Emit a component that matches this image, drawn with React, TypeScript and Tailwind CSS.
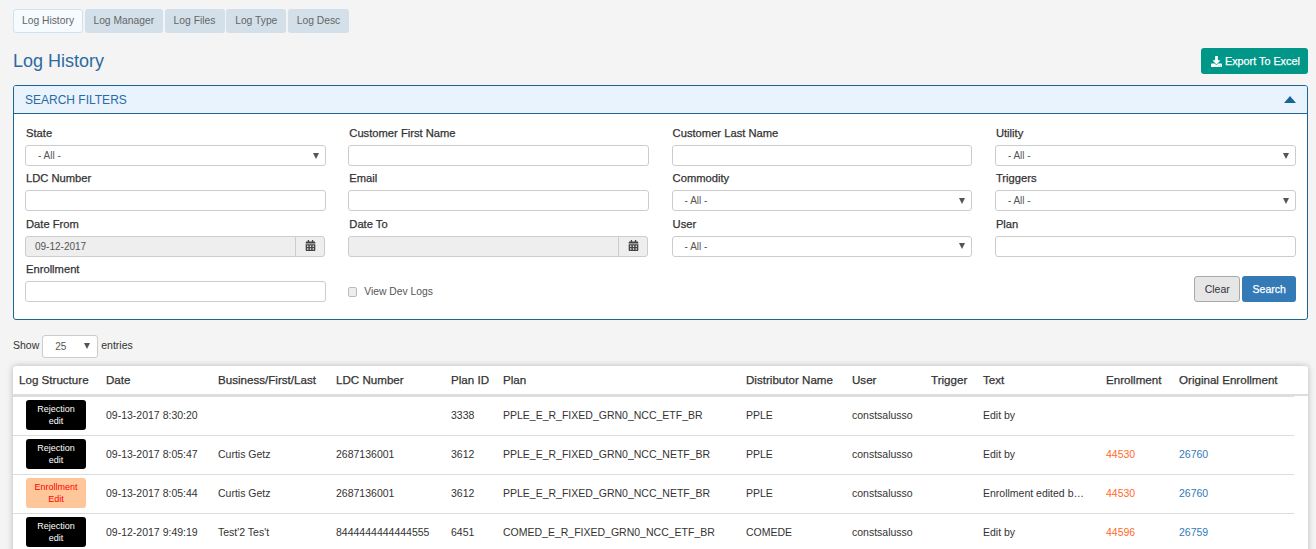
import { FaCalendarAlt, FaDownload } from 'react-icons/fa'

const tabs = [
  { label: 'Log History', w: 'w-[70px]', active: true },
  { label: 'Log Manager', w: 'w-[78px]' },
  { label: 'Log Files', w: 'w-[60px]' },
  { label: 'Log Type', w: 'w-[60px]' },
  { label: 'Log Desc', w: 'w-[61px]' },
]

const Field = ({ label, children }: { label?: string; children: React.ReactNode }) => (
  <div className="flex flex-col">
    <label className="h-[21px] pt-[1px] pl-[1px] text-[11.2px] leading-[16px] font-normal text-[#333] [-webkit-text-stroke:0.25px_#333]">{label}</label>
    {children}
  </div>
)

const TextInput = () => (
  <input className="h-[21px] w-full rounded-[3px] border border-[#ccc] bg-white" />
)

const Arrow = () => (
  <span className="mr-[2px] h-0 w-0 border-x-[3px] border-t-[6px] border-x-transparent border-t-[#555]" />
)

const Select = () => (
  <div className="flex h-[21px] w-full items-center justify-between rounded-[3px] border border-[#ccc] bg-white pl-[12px] pr-[4px] text-[10px] text-[#555]">
    <span>- All -</span>
    <Arrow />
  </div>
)

const DateInput = ({ value }: { value?: string }) => (
  <div className="flex h-[21px] w-[300px] rounded-[3px] border border-[#ccc] bg-[#eee]">
    <div className="flex-1 pl-[9px] text-[10px] leading-[19px] text-[#555]">{value}</div>
    <div className="flex w-[29px] items-center justify-center border-l border-[#ccc]">
      <FaCalendarAlt className="mb-[1px] text-[11px] text-[#444]" />
    </div>
  </div>
)

const Badge = ({ kind }: { kind: 'rejection' | 'enrollment' }) =>
  kind === 'rejection' ? (
    <div className="ml-[7px] h-[30px] w-[60px] rounded-[3px] bg-black pt-[3px] text-center text-[9px] leading-[12px] text-white">
      Rejection
      <br />
      edit
    </div>
  ) : (
    <div className="ml-[7px] h-[30px] w-[60px] rounded-[3px] bg-[#ffc799] pt-[3px] text-center text-[9px] leading-[12px] text-[#f00]">
      Enrollment
      <br />
      Edit
    </div>
  )

const rows = [
  { kind: 'rejection', date: '09-13-2017 8:30:20', name: '', ldc: '', planId: '3338', plan: 'PPLE_E_R_FIXED_GRN0_NCC_ETF_BR', dist: 'PPLE', text: 'Edit by', enr: '', orig: '' },
  { kind: 'rejection', date: '09-13-2017 8:05:47', name: 'Curtis Getz', ldc: '2687136001', planId: '3612', plan: 'PPLE_E_R_FIXED_GRN0_NCC_NETF_BR', dist: 'PPLE', text: 'Edit by', enr: '44530', orig: '26760' },
  { kind: 'enrollment', date: '09-13-2017 8:05:44', name: 'Curtis Getz', ldc: '2687136001', planId: '3612', plan: 'PPLE_E_R_FIXED_GRN0_NCC_NETF_BR', dist: 'PPLE', text: 'Enrollment edited b…', enr: '44530', orig: '26760' },
  { kind: 'rejection', date: '09-12-2017 9:49:19', name: "Test'2 Tes't", ldc: '8444444444444555', planId: '6451', plan: 'COMED_E_R_FIXED_GRN0_NCC_ETF_BR', dist: 'COMEDE', text: 'Edit by', enr: '44596', orig: '26759' },
] as const

const columns = [
  { label: 'Log Structure', w: 'w-[93px] pl-[6px]' },
  { label: 'Date', w: 'w-[112px]' },
  { label: 'Business/First/Last', w: 'w-[118px]' },
  { label: 'LDC Number', w: 'w-[115px]' },
  { label: 'Plan ID', w: 'w-[52px]' },
  { label: 'Plan', w: 'w-[243px]' },
  { label: 'Distributor Name', w: 'w-[106px]' },
  { label: 'User', w: 'w-[79px]' },
  { label: 'Trigger', w: 'w-[52px]' },
  { label: 'Text', w: 'w-[123px]' },
  { label: 'Enrollment', w: 'w-[73px]' },
  { label: 'Original Enrollment', w: 'w-[115px]' },
]

export default function App() {
  return (
    <div className="h-[549px] overflow-hidden bg-[#f4f4f4] pl-[13px] pr-[8px] pt-[9px] font-['Liberation_Sans',Arial,sans-serif] text-[11px] text-[#333]">
      {/* Tabs */}
      <div className="flex h-[24px] gap-[1.75px]">
        {tabs.map((t) => (
          <div
            key={t.label}
            className={
              t.active
                ? `${t.w} rounded-[3px] border border-[#cfe2f0] bg-[#f5fbff] text-center text-[10.3px] leading-[22px] text-[#666]`
                : `${t.w} rounded-[3px] bg-[#d3e0ea] text-center text-[10.3px] leading-[24px] text-[#666]`
            }
          >
            {t.label}
          </div>
        ))}
      </div>

      {/* Title row */}
      <div className="mt-[15px] flex h-[37px] items-start justify-between">
        <h1 className="pt-[1px] text-[18px] leading-[24px] font-normal text-[#2c6aa0]">Log History</h1>
        <button className="flex h-[26px] w-[107px] items-center gap-[3px] rounded-[3px] bg-[#009688] pl-[10px] text-[10.8px] text-white [-webkit-text-stroke:0.25px_#fff]">
          <FaDownload className="text-[11px]" />
          Export To Excel
        </button>
      </div>

      {/* Search filters */}
      <div className="overflow-hidden rounded-[3px] border border-[#1a6496] bg-white">
        <div className="flex h-[28px] items-center justify-between border-b border-[#1a6496] bg-[#e8f3fd] pl-[11px] pr-[11px] text-[12px] text-[#2c6aa0]">
          <span>SEARCH FILTERS</span>
          <span className="h-0 w-0 border-x-[6px] border-b-[7px] border-x-transparent border-b-[#1a6496]" />
        </div>
        <div className="h-[205px] pl-[11px] pt-[10px]">
          <div className="grid grid-cols-[repeat(4,300.8px)] gap-x-[22.5px] gap-y-[3.33px]">
            <Field label="State"><Select /></Field>
            <Field label="Customer First Name"><TextInput /></Field>
            <Field label="Customer Last Name"><TextInput /></Field>
            <Field label="Utility"><Select /></Field>
            <Field label="LDC Number"><TextInput /></Field>
            <Field label="Email"><TextInput /></Field>
            <Field label="Commodity"><Select /></Field>
            <Field label="Triggers"><Select /></Field>
            <Field label="Date From"><DateInput value="09-12-2017" /></Field>
            <Field label="Date To"><DateInput /></Field>
            <Field label="User"><Select /></Field>
            <Field label="Plan"><TextInput /></Field>
            <Field label="Enrollment"><TextInput /></Field>
            <div className="flex items-end pb-[4px]">
              <span className="mb-[1px] h-[10px] w-[9px] rounded-[2px] border border-[#bbb] bg-[#eee]" />
              <span className="ml-[7px] text-[10.3px] leading-[12px] text-[#555]">View Dev Logs</span>
            </div>
            <div />
            <div className="flex items-start justify-end gap-[2px] pt-[16px]">
              <button className="h-[26px] w-[46px] rounded-[3px] border border-[#aaa] bg-[#e6e6e6] pt-[1px] pl-[1px] text-[10.5px] text-[#333]">Clear</button>
              <button className="h-[26px] w-[54px] rounded-[3px] bg-[#337ab7] pt-[1px] pl-[1px] text-[10.5px] text-white [-webkit-text-stroke:0.25px_#fff]">Search</button>
            </div>
          </div>
        </div>
      </div>

      {/* Entries */}
      <div className="mt-[14px] flex h-[24px] items-center text-[10.5px]">
        <span>Show</span>
        <div className="mx-[3px] flex h-[23px] w-[56px] items-center justify-between rounded-[3px] border border-[#ccc] bg-white pl-[12px] pr-[5px] text-[10px] text-[#555]">
          <span>25</span>
          <Arrow />
        </div>
        <span>entries</span>
      </div>

      {/* Table */}
      <div className="mt-[8px] h-[200px] rounded-[3px] bg-white shadow-[0_0_6px_rgba(0,0,0,0.25)]">
        <div className="border-b-2 border-[#ddd]">
          <table className="w-[1281px] table-fixed border-collapse">
            <thead>
              <tr className="h-[28px]">
                {columns.map((c) => (
                  <th key={c.label} className={`${c.w} p-0 text-left text-[11.6px] font-normal whitespace-nowrap [-webkit-text-stroke:0.25px_#333]`}>
                    {c.label}
                  </th>
                ))}
              </tr>
            </thead>
          </table>
        </div>
        <div className="w-[1281px] border-t border-[#ddd]">
          <table className="w-[1281px] table-fixed border-separate border-spacing-0">
            <tbody>
              {rows.map((r, i) => (
                <tr key={i} className="text-[10.5px] [&>td]:h-[39px] [&>td]:border-b [&>td]:border-[#ddd] [&>td]:p-0">
                  <td className="w-[93px] pl-[6px]! pb-[5px]! pt-[3px]!"><Badge kind={r.kind} /></td>
                  <td className="w-[112px]">{r.date}</td>
                  <td className="w-[118px]">{r.name}</td>
                  <td className="w-[115px]">{r.ldc}</td>
                  <td className="w-[52px]">{r.planId}</td>
                  <td className="w-[243px]">{r.plan}</td>
                  <td className="w-[106px]">{r.dist}</td>
                  <td className="w-[79px]">constsalusso</td>
                  <td className="w-[52px]"></td>
                  <td className="w-[123px] whitespace-nowrap">{r.text}</td>
                  <td className="w-[73px] text-[#ff6a2b]">{r.enr}</td>
                  <td className="w-[115px] text-[#337ab7]">{r.orig}</td>
                </tr>
              ))}
            </tbody>
          </table>
        </div>
      </div>
    </div>
  )
}
